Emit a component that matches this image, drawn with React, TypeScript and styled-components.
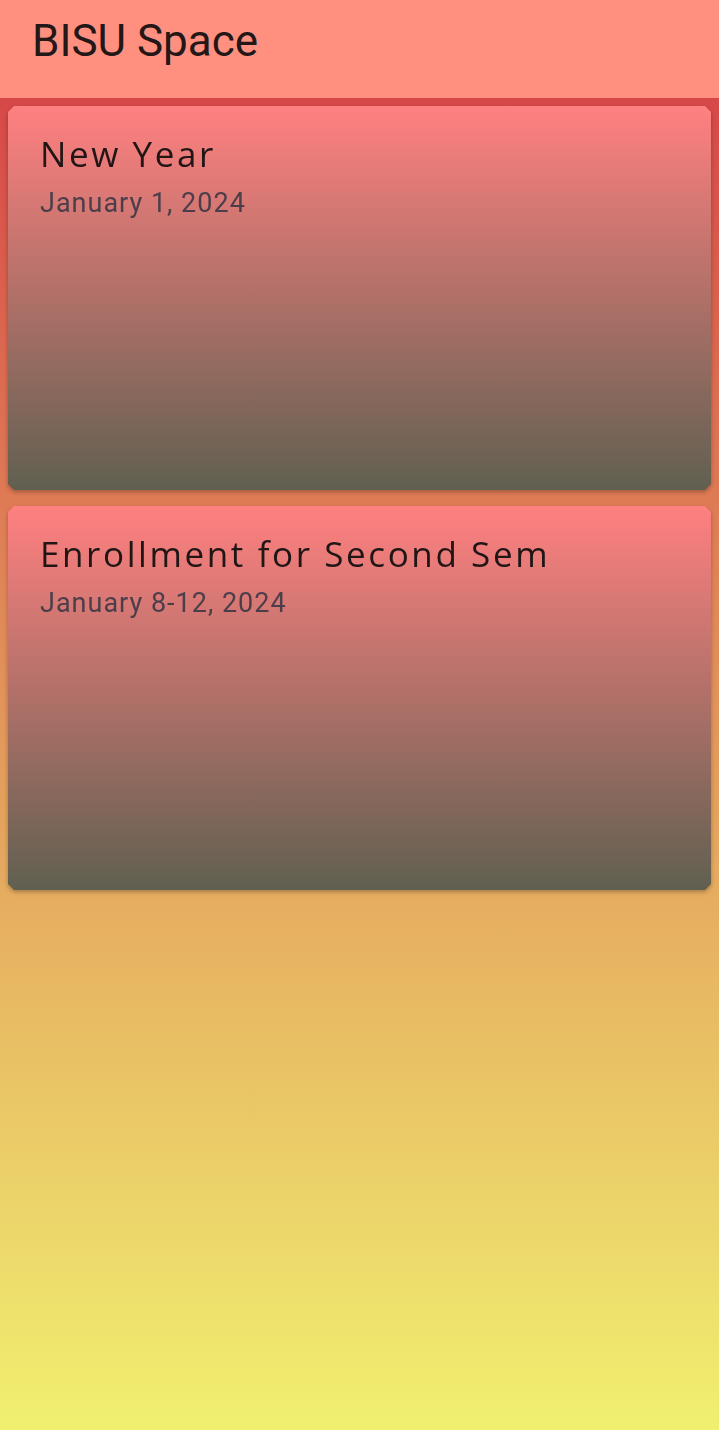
import React from "react";
import styled, { createGlobalStyle } from "styled-components";

const GlobalStyle = createGlobalStyle`
  html, body { margin: 0; padding: 0; }
  body { font-family: Roboto, "Noto Sans", sans-serif; }
`;

const Page = styled.div`
  display: flex;
  flex-direction: column;
  min-height: 1430px;
  width: 719px;
`;

const AppBar = styled.header`
  height: 98px;
  background: #ff9080;
  display: flex;
  align-items: center;
  padding: 0 32px;
  box-sizing: border-box;
`;

const AppTitle = styled.h1`
  margin: 0;
  margin-top: -17px;
  font-family: Roboto, sans-serif;
  font-weight: 400;
  font-size: 44px;
  color: #231717;
`;

const Body = styled.main`
  flex: 1;
  background: linear-gradient(to bottom, #d74848 0%, #e6ad60 60%, #f0f070 100%);
  padding: 8px;
  display: flex;
  flex-direction: column;
  gap: 16px;
`;

const CardShadow = styled.div`
  filter: drop-shadow(0 2px 2px rgba(0, 0, 0, 0.28));
`;

const Card = styled.section`
  height: 384px;
  box-sizing: border-box;
  padding: 25px 32px;
  background: linear-gradient(to bottom, #ff8080 0%, #606050 100%);
  clip-path: polygon(
    6px 0, calc(100% - 6px) 0, 100% 6px, 100% calc(100% - 6px),
    calc(100% - 6px) 100%, 6px 100%, 0 calc(100% - 6px), 0 6px
  );
`;

const CardTitle = styled.h2`
  margin: 0;
  font-family: "Open Sans", "Noto Sans", sans-serif;
  font-weight: 400;
  font-size: 35px;
  letter-spacing: 2.6px;
  line-height: 46px;
  color: #201616;
`;

const CardDate = styled.p`
  margin: 9px 0 0;
  font-family: Roboto, sans-serif;
  font-size: 27px;
  letter-spacing: 1px;
  line-height: 34px;
  color: rgba(60, 55, 70, 0.9);
`;

const events = [
  { title: "New Year", date: "January 1, 2024" },
  { title: "Enrollment for Second Sem", date: "January 8-12, 2024" },
];

export default function App() {
  return (
    <>
      <GlobalStyle />
      <Page>
        <AppBar>
          <AppTitle>BISU Space</AppTitle>
        </AppBar>
        <Body>
          {events.map((e) => (
            <CardShadow key={e.title}>
              <Card>
                <CardTitle>{e.title}</CardTitle>
                <CardDate>{e.date}</CardDate>
              </Card>
            </CardShadow>
          ))}
        </Body>
      </Page>
    </>
  );
}
